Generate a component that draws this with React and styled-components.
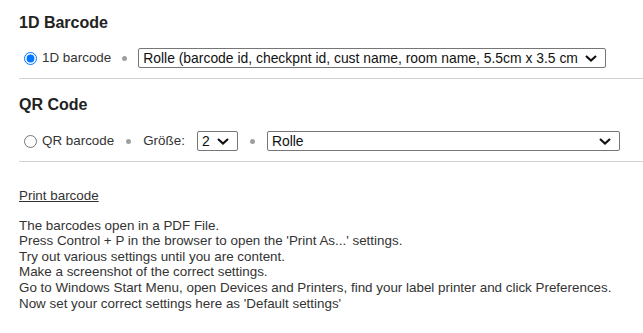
import React from 'react';
import styled, { createGlobalStyle } from 'styled-components';

const GlobalStyle = createGlobalStyle`
  body {
    margin: 0;
    background: #fff;
    font-family: "Liberation Sans", Arial, sans-serif;
    color: #333;
  }
`;

const Page = styled.div`
  padding-left: 19px;
  font-size: 13.4px;
  line-height: 15.6px;
`;

const Heading = styled.h3`
  margin: ${(p) => p.$top}px 0 0;
  font-size: 16px;
  line-height: 18px;
  font-weight: bold;
  color: #222;
`;

const Row = styled.div`
  display: flex;
  align-items: center;
  gap: ${(p) => p.$gap}px;
  height: 20px;
  margin-top: ${(p) => p.$top}px;
`;

const RadioLabel = styled.label`
  display: flex;
  align-items: center;
  color: #333;

  input {
    margin: 0 5px 0 5px;
    width: 13px;
    height: 13px;
    accent-color: #0075ff;
  }
`;

const Dot = styled.span`
  width: 5px;
  height: 5px;
  border-radius: 50%;
  background: #a0a0a0;
`;

const Text = styled.span`
  color: #333;
`;

const SelectWrap = styled.span`
  position: relative;
  display: inline-flex;
  width: ${(p) => (p.$width ? `${p.$width}px` : 'auto')};
`;

const Select = styled.select`
  appearance: none;
  width: 100%;
  height: 20px;
  margin: 0;
  padding: 0 ${(p) => p.$padRight}px 0 4px;
  border: 1px solid #767676;
  border-radius: 2px;
  background: #fff;
  font-family: "Liberation Sans", Arial, sans-serif;
  font-size: 13.9px;
  color: #111;
  outline: none;
`;

const Chevron = styled.svg`
  position: absolute;
  right: 9px;
  top: 7px;
  pointer-events: none;
`;

const Rule = styled.hr`
  margin: 10px 0 0;
  border: 0;
  border-top: 1px solid #d3d3d3;
  height: 0;
`;

const PrintLink = styled.a`
  display: inline-block;
  margin-top: 26px;
  color: #333;
  text-decoration: underline;
  cursor: pointer;
`;

const Info = styled.p`
  margin: 14px 0 0;
  color: #333;
`;

const Dropdown = ({ value, width, padRight = 30 }) => (
  <SelectWrap $width={width}>
    <Select $padRight={padRight} defaultValue={value}>
      <option>{value}</option>
    </Select>
    <Chevron width="12" height="7" viewBox="0 0 12 7">
      <path d="M1 1l5 4.5L11 1" fill="none" stroke="#111" strokeWidth="2.2" />
    </Chevron>
  </SelectWrap>
);

export default function App() {
  return (
    <Page>
      <GlobalStyle />
      <Heading $top={14}>1D Barcode</Heading>
      <Row $top={16} $gap={11}>
        <RadioLabel>
          <input type="radio" name="kind" defaultChecked />
          1D barcode
        </RadioLabel>
        <Dot />
        <Dropdown value="Rolle (barcode id, checkpnt id, cust name, room name, 5.5cm x 3.5 cm" padRight={27} />
      </Row>
      <Rule />

      <Heading $top={17}>QR Code</Heading>
      <Row $top={17} $gap={12}>
        <RadioLabel>
          <input type="radio" name="kind" />
          QR barcode
        </RadioLabel>
        <Dot />
        <Text>Größe:</Text>
        <Dropdown value="2" width={41} padRight={26} />
        <Dot />
        <Dropdown value="Rolle" width={353} />
      </Row>
      <Rule />

      <PrintLink>Print barcode</PrintLink>
      <Info>
        The barcodes open in a PDF File.
        <br />
        Press Control + P in the browser to open the 'Print As...' settings.
        <br />
        Try out various settings until you are content.
        <br />
        Make a screenshot of the correct settings.
        <br />
        Go to Windows Start Menu, open Devices and Printers, find your label printer and click Preferences.
        <br />
        Now set your correct settings here as 'Default settings'
      </Info>
    </Page>
  );
}
